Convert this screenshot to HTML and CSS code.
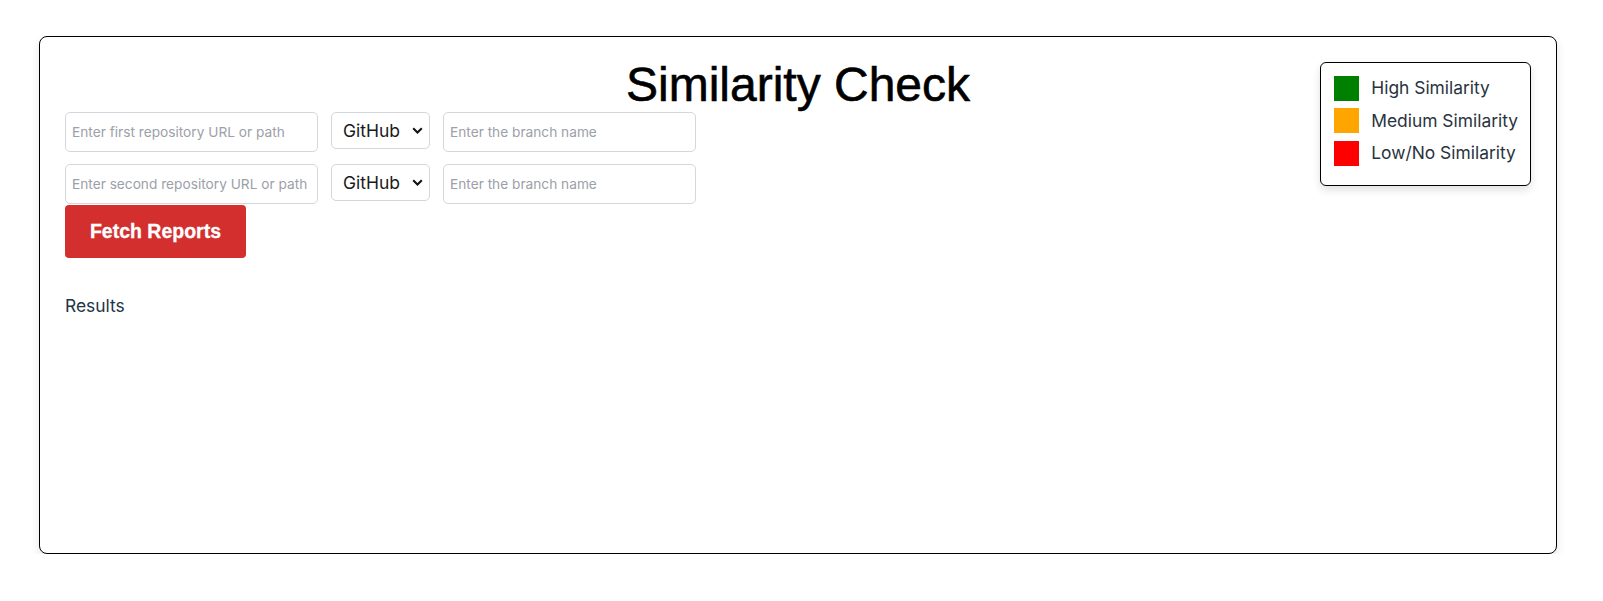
FILE: index.html
```html
<!DOCTYPE html>
<html lang="en">
<head>
<meta charset="utf-8">
<title>Similarity Check</title>
<link rel="stylesheet" href="styles.css">
</head>
<body>
<div class="page">
  <div class="card">
    <h1 class="title">Similarity Check</h1>
    <div class="legend">
      <div class="legend-item"><span class="swatch swatch-high"></span><span>High Similarity</span></div>
      <div class="legend-item"><span class="swatch swatch-medium"></span><span>Medium Similarity</span></div>
      <div class="legend-item"><span class="swatch swatch-low"></span><span>Low/No Similarity</span></div>
    </div>
    <div class="form">
      <div class="row">
        <input class="text-input" type="text" placeholder="Enter first repository URL or path">
        <select class="source-select"><option>GitHub</option></select>
        <input class="text-input" type="text" placeholder="Enter the branch name">
      </div>
      <div class="row">
        <input class="text-input" type="text" placeholder="Enter second repository URL or path">
        <select class="source-select"><option>GitHub</option></select>
        <input class="text-input" type="text" placeholder="Enter the branch name">
      </div>
    </div>
    <button class="fetch-btn" type="button">Fetch Reports</button>
    <div class="results">Results</div>
  </div>
</div>
</body>
</html>
```

FILE: styles.css
```css
* { box-sizing: border-box; }

html, body {
  margin: 0;
  padding: 0;
  background: #ffffff;
}

body {
  font-family: Inter, "Noto Sans", sans-serif;
  color: #213547;
  font-size: 16px;
}

.page {
  padding: 36px 0 0 39px;
}

.card {
  position: relative;
  width: 1518px;
  height: 518px;
  border: 1px solid #000;
  border-radius: 8px;
  background: #fff;
  box-shadow: 0 4px 10px rgba(0, 0, 0, 0.1);
  padding: 22px 25px 25px 25px;
}

.title {
  margin: 0;
  text-align: center;
  font-family: "Liberation Sans", Arial, sans-serif;
  font-size: 48px;
  font-weight: 400;
  line-height: 52.8px;
  color: #000;
  -webkit-text-stroke: 0.6px #000;
}

.legend {
  position: absolute;
  top: 25px;
  right: 25px;
  padding: 13px 12px 11px 13px;
  border: 1px solid #000;
  border-radius: 6px;
  background: #fff;
  box-shadow: 0 4px 8px rgba(0, 0, 0, 0.12);
  color: #2a3340;
  font-size: 17.4px;
}

.legend-item {
  display: flex;
  align-items: center;
  gap: 12.5px;
  height: 24.5px;
  margin-bottom: 8px;
  line-height: 24px;
}

.swatch {
  display: inline-block;
  width: 25px;
  height: 25px;
}

.swatch-high { background: #008000; }
.swatch-medium { background: #ffa500; }
.swatch-low { background: #ff0000; }

.form {
  display: flex;
  flex-direction: column;
  gap: 12.6px;
}

.row {
  display: flex;
  align-items: flex-start;
  gap: 13px;
}

.text-input {
  width: 253px;
  height: 40px;
  border: 1px solid #d4d6dc;
  border-radius: 5px;
  padding: 0 6px;
  font-family: Inter, "Noto Sans", sans-serif;
  font-size: 13.7px;
  color: #213547;
  background: #fff;
  outline: none;
}

.text-input::placeholder {
  color: #9ca0a8;
}

.source-select {
  -webkit-appearance: none;
  appearance: none;
  width: 99px;
  height: 37px;
  border: 1px solid #d4d6dc;
  border-radius: 5px;
  padding: 0 0 0 11px;
  font-family: Inter, "Noto Sans", sans-serif;
  font-size: 17.5px;
  color: #1a1a1a;
  background-color: #fff;
  background-image: url("data:image/svg+xml,%3Csvg xmlns='http://www.w3.org/2000/svg' width='11' height='7' viewBox='0 0 11 7'%3E%3Cpath d='M1.2 1.2 L5.5 5.5 L9.8 1.2' fill='none' stroke='%23111' stroke-width='2'/%3E%3C/svg%3E");
  background-repeat: no-repeat;
  background-position: right 6px center;
  background-size: 11px 7px;
  outline: none;
}

.fetch-btn {
  display: block;
  margin-top: 0.7px;
  width: 181px;
  height: 53px;
  border: none;
  border-radius: 4px;
  background: #d32f2f;
  color: #fff;
  font-family: "Liberation Sans", Arial, sans-serif;
  font-size: 19.5px;
  font-weight: 700;
  -webkit-text-stroke: 0.3px #fff;
  cursor: pointer;
}

.results {
  margin-top: 38px;
  font-size: 17.4px;
  line-height: 20px;
  color: #213547;
}
```
